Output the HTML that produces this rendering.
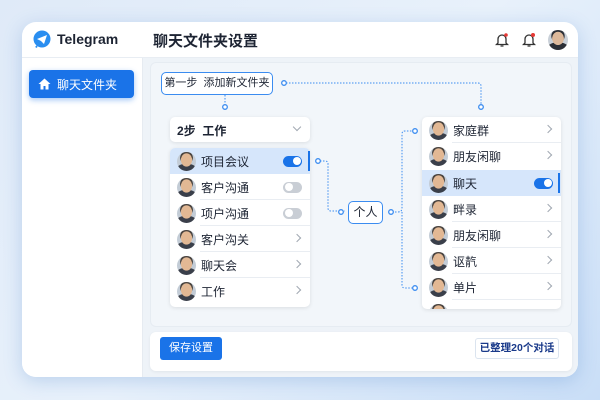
<!DOCTYPE html>
<html><head><meta charset="utf-8"><style>
*{box-sizing:border-box;margin:0;padding:0}
body{width:600px;height:400px;overflow:hidden;background:linear-gradient(135deg,#dfeaf8,#e8f1fb 50%,#c9def7);font-family:"Liberation Sans","Noto Sans CJK SC",sans-serif;color:#1d2433;position:relative}
.card{position:absolute;left:22px;top:22px;width:556px;height:355px;background:#fff;border-radius:14px;box-shadow:0 4px 18px rgba(60,120,200,.25);overflow:hidden}
.hdr{position:absolute;left:0;top:0;width:556px;height:36px;border-bottom:1px solid #e8edf3}
.side{position:absolute;left:0;top:36px;width:121px;height:319px;background:#fff;border-right:1px solid #e6ebf1}
.content{position:absolute;left:121px;top:36px;width:435px;height:319px;background:#eef3f8}
.panel{position:absolute;left:7px;top:4px;width:422px;height:265px;background:#f2f6fa;border-radius:6px;border:1px solid #e6ecf2}
.foot{position:absolute;left:7px;top:274px;width:422px;height:39px;background:#fff;border-radius:6px;box-shadow:0 1px 3px rgba(0,0,0,.06)}
.abs{position:absolute}
.list{position:absolute;background:#fff;border-radius:5px;box-shadow:0 1px 4px rgba(0,0,0,.1);overflow:hidden}
.row{position:absolute;left:0;width:100%;height:26px;font-size:12px;display:flex;align-items:center;white-space:nowrap}
.row .av{width:19px;height:19px;border-radius:50%;background:radial-gradient(ellipse 30% 36% at 50% 42%,#e2b894 0 95%,transparent 100%),radial-gradient(ellipse 60% 40% at 50% 100%,#3a3f4a 0 95%,transparent 100%),radial-gradient(circle at 50% 30%,#4a4440 0 38%,#c3ccd6 40%);margin-left:7px;margin-right:5px;flex:none}
.row.sel{background:#d6e6fb}
.chev{position:absolute;right:10px;top:9px;width:6px;height:6px;border-top:1.2px solid #a0a8b2;border-right:1.2px solid #a0a8b2;transform:rotate(45deg)}
.tog{position:absolute;right:8px;width:19px;height:11px;border-radius:6px;background:#c9ced5}
.tog::after{content:"";position:absolute;left:1.5px;top:1.5px;width:8px;height:8px;border-radius:50%;background:#fff}
.tog.on{background:#1a73e8}.tog.on::after{left:9.5px}
.line{position:absolute;border-bottom:1px solid #e9edf2;left:30px;right:0;bottom:0}
.box{position:absolute;background:#fff;border:1.3px solid #3b8cf0;border-radius:5px;font-size:11.5px;text-align:center;line-height:21px;white-space:nowrap}
</style></head><body>
<div class="card">
 <div class="hdr">
  <svg class="abs" style="left:10px;top:8px" width="20" height="20" viewBox="0 0 20 20"><circle cx="10" cy="9" r="8.5" fill="#2a8ef0"/><path d="M3 17 L6 14 L5 18Z" fill="#2a8ef0"/><path d="M5 9 L15 5 L12 14 L9 11Z" fill="#fff"/></svg>
  <div class="abs" style="left:35px;top:9px;font-size:14px;font-weight:bold">Telegram</div>
  <div class="abs" style="left:131px;top:8px;font-size:15px;font-weight:bold">聊天文件夹设置</div>
  <svg class="abs" style="left:473px;top:10px" width="14" height="16" viewBox="0 0 14 16"><path d="M3 11V7a4 4 0 018 0v4l1.5 1.5h-11Z M5.5 14h3" fill="none" stroke="#333" stroke-width="1.3"/><circle cx="11" cy="3" r="1.8" fill="#e53935"/></svg>
  <svg class="abs" style="left:500px;top:10px" width="14" height="16" viewBox="0 0 14 16"><path d="M3 11V7a4 4 0 018 0v4l1.5 1.5h-11Z M5.5 14h3" fill="none" stroke="#333" stroke-width="1.3"/><circle cx="11" cy="3" r="2" fill="#e53935"/></svg>
  <div class="abs" style="left:526px;top:8px;width:20px;height:20px;border-radius:50%;background:radial-gradient(ellipse 30% 34% at 50% 42%,#dcb89a 0 95%,transparent 100%),radial-gradient(ellipse 60% 40% at 50% 100%,#2c2f36 0 95%,transparent 100%),radial-gradient(circle at 50% 30%,#2c2f36 0 38%,#c9d0d8 40%)"></div>
 </div>
 <div class="side">
  <div class="abs" style="left:7px;top:12px;width:105px;height:28px;background:#1a73e8;border-radius:4px;color:#fff;font-size:12px;display:flex;align-items:center;box-shadow:0 2px 6px rgba(26,115,232,.4)">
   <svg style="margin-left:9px;margin-right:6px" width="13" height="12" viewBox="0 0 13 12"><path d="M6.5 0.5L0.5 6H2.5V11.5H5.5V8H7.5V11.5H10.5V6H12.5Z" fill="#fff"/></svg>聊天文件夹</div>
 </div>
 <div class="content">
  <div class="panel"></div>
  <div class="foot">
   <div class="abs" style="left:10px;top:5px;width:62px;height:23px;background:#1a73e8;border-radius:3px;color:#fff;font-size:11px;text-align:center;line-height:23px">保存设置</div>
   <div class="abs" style="left:325px;top:6px;width:84px;height:21px;border:1px solid #dbe4ef;border-radius:3px;color:#1a3a8a;font-size:10.5px;text-align:center;line-height:19px;font-weight:bold;white-space:nowrap">已整理20个对话</div>
  </div>
 </div>
</div>
<svg class="abs" style="left:0;top:0" width="600" height="400">
 <g fill="none" stroke="#3b8cf0" stroke-width="1" stroke-dasharray="1.5 1.5">
  <path d="M286 83H478q3 0 3 3V104"/>
  <path d="M225 95V104"/>
  <path d="M320 161h5q3 0 3 3v44q0 3 3 3h14"/>
  <path d="M392 212h6q4 0 4 -4V134q0 -3 3 -3h8"/>
  <path d="M402 212V285q0 3 3 3h8"/>
 </g>
 <g fill="#fff" stroke="#3b8cf0" stroke-width="1.3">
  <circle cx="284" cy="83" r="2.3"/><circle cx="481" cy="107" r="2.3"/><circle cx="225" cy="107" r="2.3"/>
  <circle cx="318" cy="161" r="2.3"/><circle cx="341" cy="212" r="2.3"/><circle cx="391" cy="212" r="2.3"/>
  <circle cx="415" cy="131" r="2.3"/><circle cx="415" cy="288" r="2.3"/>
 </g>
</svg>
<div class="box" style="left:161px;top:72px;width:112px;height:23px;font-size:11px">第一步&nbsp; 添加新文件夹</div>
<div class="box" style="left:348px;top:201px;width:35px;height:23px;font-size:12px">个人</div>
<div class="list" style="left:170px;top:117px;width:140px;height:25px"><div class="abs" style="left:7px;top:5px;font-size:12px;font-weight:bold">2步&nbsp; 工作</div><div class="abs" style="right:10px;top:7px;width:6px;height:6px;border-right:1.2px solid #a0a8b2;border-bottom:1.2px solid #a0a8b2;transform:rotate(45deg)"></div></div>
<div class="list" style="left:170px;top:148px;width:140px;height:159px">
 <div class="row sel" style="top:0"><div class="av"></div>项目会议<div class="tog on"></div></div>
 <div class="row" style="top:26px"><div class="av"></div>客户沟通<div class="tog"></div><div class="line"></div></div>
 <div class="row" style="top:52px"><div class="av"></div>项户沟通<div class="tog"></div><div class="line"></div></div>
 <div class="row" style="top:78px"><div class="av"></div>客户沟关<span class="chev"></span><div class="line"></div></div>
 <div class="row" style="top:104px"><div class="av"></div>聊天会<span class="chev"></span><div class="line"></div></div>
 <div class="row" style="top:130px"><div class="av"></div>工作<span class="chev"></span></div>
</div>
<div class="abs" style="left:308px;top:151px;width:2px;height:20px;background:#1a73e8"></div>
<div class="list" style="left:422px;top:117px;width:139px;height:192px">
 <div class="row" style="top:0"><div class="av"></div>家庭群<span class="chev"></span><div class="line"></div></div>
 <div class="row" style="top:26px"><div class="av"></div>朋友闲聊<span class="chev"></span></div>
 <div class="row sel" style="top:53px"><div class="av"></div>聊天<div class="tog on"></div></div>
 <div class="row" style="top:79px"><div class="av"></div>畔录<span class="chev"></span><div class="line"></div></div>
 <div class="row" style="top:105px"><div class="av"></div>朋友闲聊<span class="chev"></span><div class="line"></div></div>
 <div class="row" style="top:131px"><div class="av"></div>讴靔<span class="chev"></span><div class="line"></div></div>
 <div class="row" style="top:157px"><div class="av"></div>单片<span class="chev"></span><div class="line"></div></div>
 <div class="row" style="top:183px"><div class="av"></div></div>
</div>
<div class="abs" style="left:558px;top:173px;width:2px;height:20px;background:#1a73e8"></div>
</body></html>
